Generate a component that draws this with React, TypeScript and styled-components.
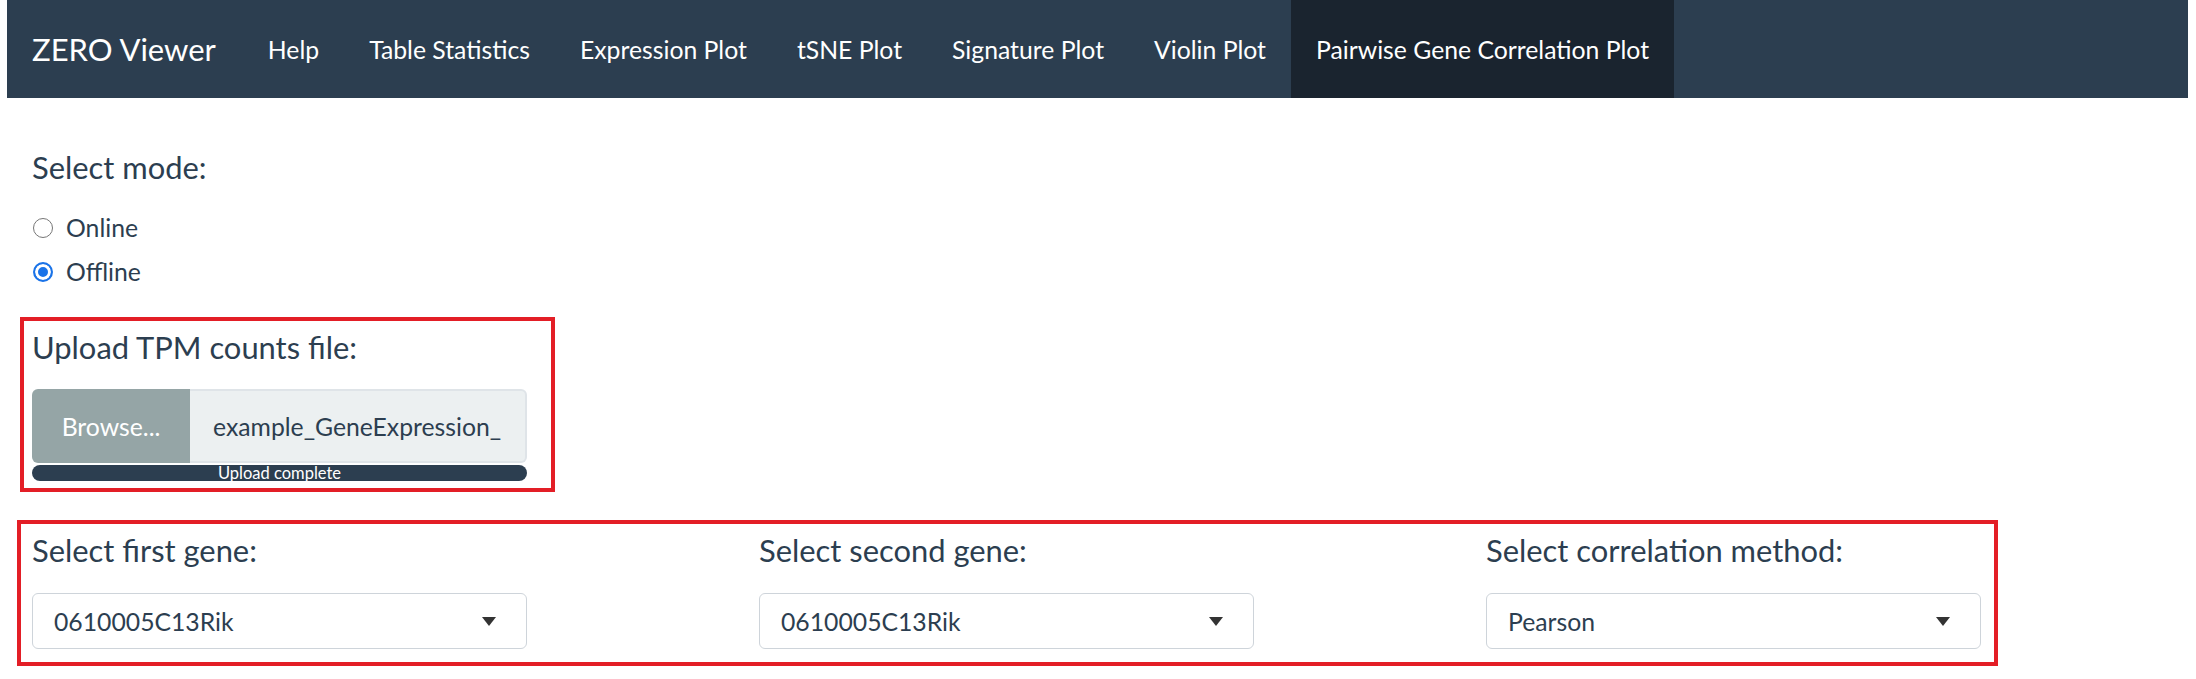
import React from "react";
import styled, { createGlobalStyle } from "styled-components";

const GlobalStyle = createGlobalStyle`
  html, body { margin: 0; padding: 0; background: #ffffff; }
  body {
    font-family: Lato, "Open Sans", "Liberation Sans", sans-serif;
    color: #2c3e50;
  }
  * { box-sizing: border-box; }
`;

const Page = styled.div`
  width: 2196px;
  min-height: 679px;
  padding: 0 8px 0 7px;
`;

const Navbar = styled.nav`
  height: 98px;
  background: #2c3e50;
  display: flex;
  align-items: stretch;
  padding-left: 25px;
`;

const Brand = styled.div`
  align-self: center;
  color: #ffffff;
  font-size: 31px;
  margin-right: 27px;
  white-space: nowrap;
`;

const NavLink = styled.div<{ $active?: boolean }>`
  display: flex;
  align-items: center;
  padding: 0 25px;
  color: #ffffff;
  font-size: 24.75px;
  white-space: nowrap;
  background: ${(p) => (p.$active ? "#1a242f" : "transparent")};
`;

const Content = styled.main`
  padding: 49px 25px 0 25px;
`;

const Label = styled.div`
  font-size: 30.9px;
  line-height: 42px;
  color: #2c3e50;
  white-space: nowrap;
`;

const RadioGroup = styled.div`
  display: flex;
  flex-direction: column;
  gap: 7px;
  margin-top: 20px;
`;

const RadioRow = styled.label`
  display: flex;
  align-items: center;
  gap: 13px;
  font-size: 24.75px;
  line-height: 37px;
  padding-left: 1px;
`;

const RadioDot = styled.span<{ $checked?: boolean }>`
  width: 20px;
  height: 20px;
  border-radius: 50%;
  flex: none;
  background: ${(p) => (p.$checked ? "#1a73e8" : "#ffffff")};
  border: ${(p) => (p.$checked ? "2px solid #1a73e8" : "1.5px solid #767676")};
  box-shadow: ${(p) => (p.$checked ? "inset 0 0 0 3px #ffffff" : "none")};
`;

const UploadGroup = styled.section`
  position: relative;
  width: 495px;
  margin-top: 37px;
`;

const RedFrame = styled.div<{ $t: number; $r: number; $b: number; $l: number }>`
  position: absolute;
  top: ${(p) => p.$t}px;
  right: ${(p) => p.$r}px;
  bottom: ${(p) => p.$b}px;
  left: ${(p) => p.$l}px;
  border: 4.5px solid #e31e26;
  pointer-events: none;
`;

const InputGroup = styled.div`
  display: flex;
  height: 74px;
  margin-top: 20px;
`;

const BrowseButton = styled.div`
  width: 158px;
  flex: none;
  background: #95a5a6;
  color: #ffffff;
  font-size: 24.75px;
  display: flex;
  align-items: center;
  justify-content: center;
  border-radius: 6px 0 0 6px;
`;

const FileName = styled.div`
  flex: 1;
  background: #ecf0f1;
  border: 2px solid #dfe4e8;
  border-left: none;
  border-radius: 0 6px 6px 0;
  font-size: 24.75px;
  color: #2c3e50;
  display: flex;
  align-items: center;
  padding-left: 23px;
  overflow: hidden;
  white-space: nowrap;
`;

const Progress = styled.div`
  height: 16px;
  margin-top: 2px;
  background: #2c3e50;
  border-radius: 8px;
  color: #ffffff;
  font-size: 16.5px;
  line-height: 16px;
  text-align: center;
`;

const SelectSection = styled.section`
  position: relative;
  margin: 49px -25px 0 -25px;
`;

const SelectRow = styled.div`
  display: grid;
  grid-template-columns: repeat(3, 1fr);
`;

const SelectCol = styled.div`
  padding: 0 25px;
`;

const SelectBox = styled.div`
  width: 495px;
  height: 56px;
  margin-top: 21px;
  border: 1px solid #ced4da;
  border-radius: 6px;
  display: flex;
  align-items: center;
  justify-content: space-between;
  padding: 0 30px 0 21px;
  font-size: 24.75px;
  color: #2c3e50;
  background: #ffffff;
`;

const Caret = styled.span`
  width: 0;
  height: 0;
  border-left: 7px solid transparent;
  border-right: 7px solid transparent;
  border-top: 9px solid #333333;
`;

const tabs = [
  "Help",
  "Table Statistics",
  "Expression Plot",
  "tSNE Plot",
  "Signature Plot",
  "Violin Plot",
  "Pairwise Gene Correlation Plot",
];

const selects = [
  { label: "Select first gene:", value: "0610005C13Rik" },
  { label: "Select second gene:", value: "0610005C13Rik" },
  { label: "Select correlation method:", value: "Pearson" },
];

export default function App() {
  return (
    <Page>
      <GlobalStyle />
      <Navbar>
        <Brand>ZERO Viewer</Brand>
        {tabs.map((t) => (
          <NavLink key={t} $active={t === "Pairwise Gene Correlation Plot"}>
            {t}
          </NavLink>
        ))}
      </Navbar>
      <Content>
        <Label>Select mode:</Label>
        <RadioGroup>
          <RadioRow>
            <RadioDot />
            Online
          </RadioRow>
          <RadioRow>
            <RadioDot $checked />
            Offline
          </RadioRow>
        </RadioGroup>
        <UploadGroup>
          <Label>Upload TPM counts file:</Label>
          <InputGroup>
            <BrowseButton>Browse...</BrowseButton>
            <FileName>example_GeneExpression_</FileName>
          </InputGroup>
          <Progress>Upload complete</Progress>
          <RedFrame $t={-10} $r={-28} $b={-11} $l={-12} />
        </UploadGroup>
        <SelectSection>
          <SelectRow>
            {selects.map((s) => (
              <SelectCol key={s.label}>
                <Label>{s.label}</Label>
                <SelectBox>
                  {s.value}
                  <Caret />
                </SelectBox>
              </SelectCol>
            ))}
          </SelectRow>
          <RedFrame $t={-10} $r={190} $b={-17} $l={10} />
        </SelectSection>
      </Content>
    </Page>
  );
}
